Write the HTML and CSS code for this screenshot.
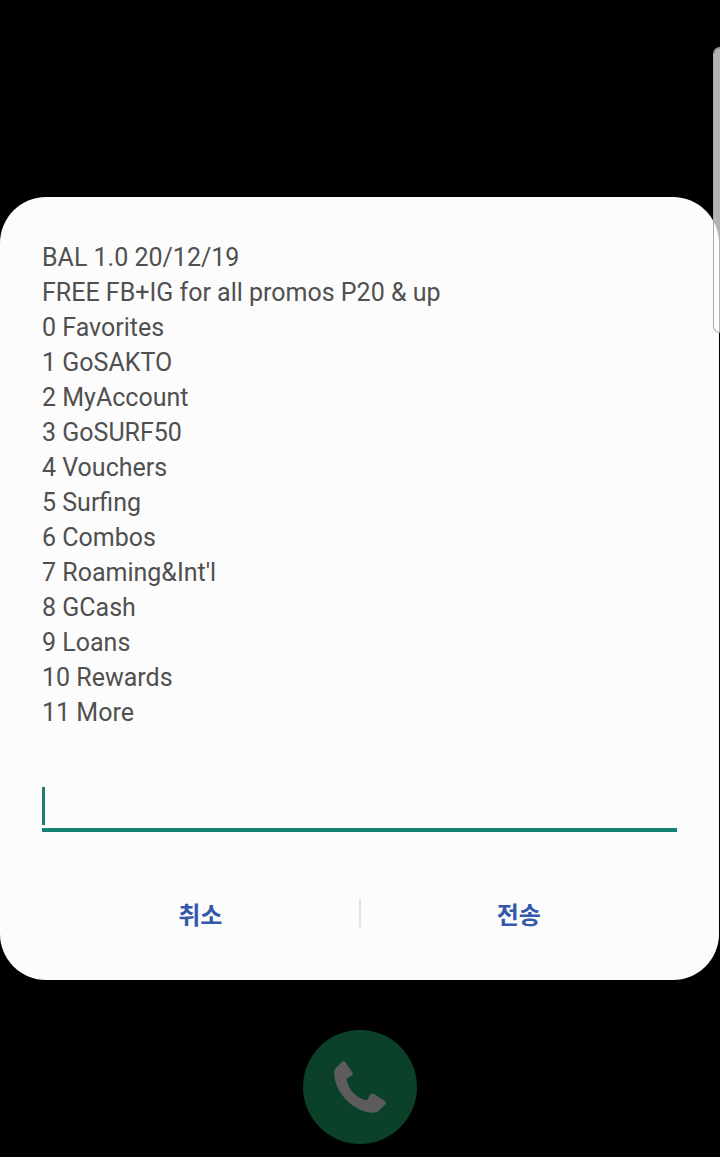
FILE: index.html
```
<!DOCTYPE html>
<html lang="ko">
<head>
  <meta charset="UTF-8" />
  <meta name="viewport" content="width=device-width, initial-scale=1">
  <title>USSD</title>
  <link rel="stylesheet" href="styles.css">
</head>
<body>
  <form class="dialog" role="dialog" aria-labelledby="message">
    <label class="message" id="message" for="reply">BAL 1.0 20/12/19
FREE FB+IG for all promos P20 &amp; up
0 Favorites
1 GoSAKTO
2 MyAccount
3 GoSURF50
4 Vouchers
5 Surfing
6 Combos
7 Roaming&amp;Int'l
8 GCash
9 Loans
10 Rewards
11 More</label>

    <div class="field">
      <input type="text" id="reply" class="reply" autocomplete="off">
      <span class="caret"></span>
    </div>

    <div class="actions">
      <button type="button">취소</button>
      <span class="divider"></span>
      <button type="submit">전송</button>
    </div>
  </form>

  <button type="button" class="call-btn" aria-label="Call">
    <svg viewBox="132 122 156 157" width="52" height="52">
      <path d="M155 125 Q161 120 166 126 L188 158 Q190 163 185 166 L170 175 C170 205 205 240 232 240 L240 225 Q244 218 251 221 L285 243 Q291 248 286 253 L267 272 Q260 279 248 278 C185 275 130 210 132 155 Q132 148 137 143 Z" />
    </svg>
  </button>

  <!-- Edge panel handle -->
  <div class="edge-handle"></div>
</body>
</html>
```
FILE: styles.css
```
body {
  background-color: #000;
  font-family: Roboto, "Noto Sans CJK KR", sans-serif;
  margin: 0;
  padding: 197px 0 13px;
  min-height: 100vh;
  box-sizing: border-box;
  display: flex;
  flex-direction: column;
  align-items: center;
  position: relative;
}

.dialog {
  background-color: #fcfcfc;
  border-radius: 46px;
  align-self: stretch;
  margin-right: 1px;
  padding: 43px 42px 38px;
  box-sizing: border-box;
}

.message {
  display: block;
  color: #505050;
  font-size: 25px;
  line-height: 35px;
  white-space: pre-line;
}

.field {
  position: relative;
  margin-top: 52px;
}

.reply {
  display: block;
  width: 100%;
  height: 50px;
  box-sizing: border-box;
  padding: 0 0 4px;
  border: 0;
  border-bottom: 4px solid #148272;
  border-radius: 0;
  background: transparent;
  color: #252525;
  caret-color: transparent;
  font: inherit;
  font-size: 25px;
  outline: none;
}

.caret {
  position: absolute;
  left: 0;
  bottom: 7px;
  width: 3px;
  height: 38px;
  background-color: #1f7d70;
  pointer-events: none;
}

.actions {
  display: flex;
  align-items: center;
  margin-top: 52px;
}

.actions button {
  flex: 1;
  height: 58px;
  padding: 0;
  border: 0;
  background: transparent;
  color: #3358ac;
  font-family: "Noto Sans CJK KR", sans-serif;
  font-size: 24px;
  font-weight: 600;
  cursor: pointer;
}

.divider {
  width: 2px;
  height: 28px;
  background-color: #e3e3e3;
}

.call-btn {
  width: 114px;
  height: 114px;
  margin-top: 50px;
  padding: 0;
  border: 0;
  border-radius: 50%;
  background-color: #0a4128;
  display: flex;
  justify-content: center;
  align-items: center;
  cursor: pointer;
}

.call-btn svg {
  fill: #5c5c5c;
}

.edge-handle {
  position: absolute;
  top: 47px;
  right: 0;
  width: 7px;
  height: 286px;
  box-sizing: border-box;
  border: 1px solid #aaa;
  border-right: 0;
  border-radius: 8px 0 0 8px;
  background-color: rgba(255, 255, 255, 0.7);
  background-clip: padding-box;
}
```
